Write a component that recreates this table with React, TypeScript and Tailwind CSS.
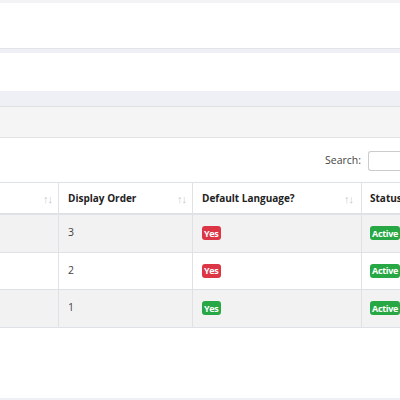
const rows = [
  { order: '3', def: 'Yes', defColor: 'bg-[#dc3545]', striped: true },
  { order: '2', def: 'Yes', defColor: 'bg-[#dc3545]', striped: false },
  { order: '1', def: 'Yes', defColor: 'bg-[#28a745]', striped: true },
];

function SortIcon() {
  return (
    <span className="ml-auto text-[11px] tracking-[-1px] text-[#c8c8c8] leading-none font-normal">↑↓</span>
  );
}

function Badge({ text, color }: { text: string; color: string }) {
  return (
    <span className={`inline-block ${color} text-white text-[9px] font-bold leading-none tracking-[-0.3px] px-[2px] py-[2.5px] rounded-[3px]`}>
      {text}
    </span>
  );
}

export default function App() {
  return (
    <div
      className="w-[400px] h-[400px] overflow-hidden bg-[#eff0f6] text-[#333]"
      style={{ fontFamily: '"Open Sans", "Noto Sans", sans-serif' }}
    >
      <div className="h-[3px] bg-[#f3f3f5]" />
      <div className="h-[46px] bg-white border-b border-[#e2e3e8]" />
      <div className="h-[4px]" />
      <div className="h-[38px] bg-white" />
      <div className="h-[15px]" />

      <div className="bg-white border-t border-[#e0e0e0]">
        <div className="h-[31px] bg-[#f5f5f5] border-b border-[#e3e3e3]" />

        <div className="flex items-center justify-end h-[44px] pt-[2px] gap-[7px] text-[10.5px] text-[#444]">
          <span>Search:</span>
          <div className="w-[32px] h-[20px] border border-[#ccc] rounded-l-[3px] border-r-0 bg-white" />
        </div>

        <div className="overflow-hidden">
          <div className="flex w-[460px] h-[33px] border-t border-[#dee2e6] border-b-2 text-[10px] font-bold text-[#222]">
            <div className="w-[59px] flex items-center pr-[6px] border-r border-[#dee2e6]">
              <SortIcon />
            </div>
            <div className="w-[134px] flex items-center pl-[9px] pr-[6px] border-r border-[#dee2e6]">
              <span>Display Order</span>
              <SortIcon />
            </div>
            <div className="w-[169px] flex items-center pl-[9px] pr-[8px] border-r border-[#dee2e6]">
              <span>Default Language?</span>
              <SortIcon />
            </div>
            <div className="flex-1 flex items-center pl-[8px]">
              <span>Status</span>
            </div>
          </div>

          {rows.map((r, i) => (
            <div
              key={i}
              className={`flex w-[460px] h-[37.5px] border-b border-[#dee2e6] text-[10.5px] text-[#444] ${r.striped ? 'bg-[#f2f2f2]' : 'bg-white'}`}
            >
              <div className="w-[59px] border-r border-[#dee2e6]" />
              <div className="w-[134px] flex items-center pl-[9px] border-r border-[#dee2e6]">{r.order}</div>
              <div className="w-[169px] flex items-center pl-[9px] border-r border-[#dee2e6]">
                <Badge text={r.def} color={r.defColor} />
              </div>
              <div className="flex-1 flex items-center pl-[8px]">
                <Badge text="Active" color="bg-[#28a745]" />
              </div>
            </div>
          ))}
        </div>

        <div className="h-[70px] bg-white" />
      </div>
    </div>
  );
}
